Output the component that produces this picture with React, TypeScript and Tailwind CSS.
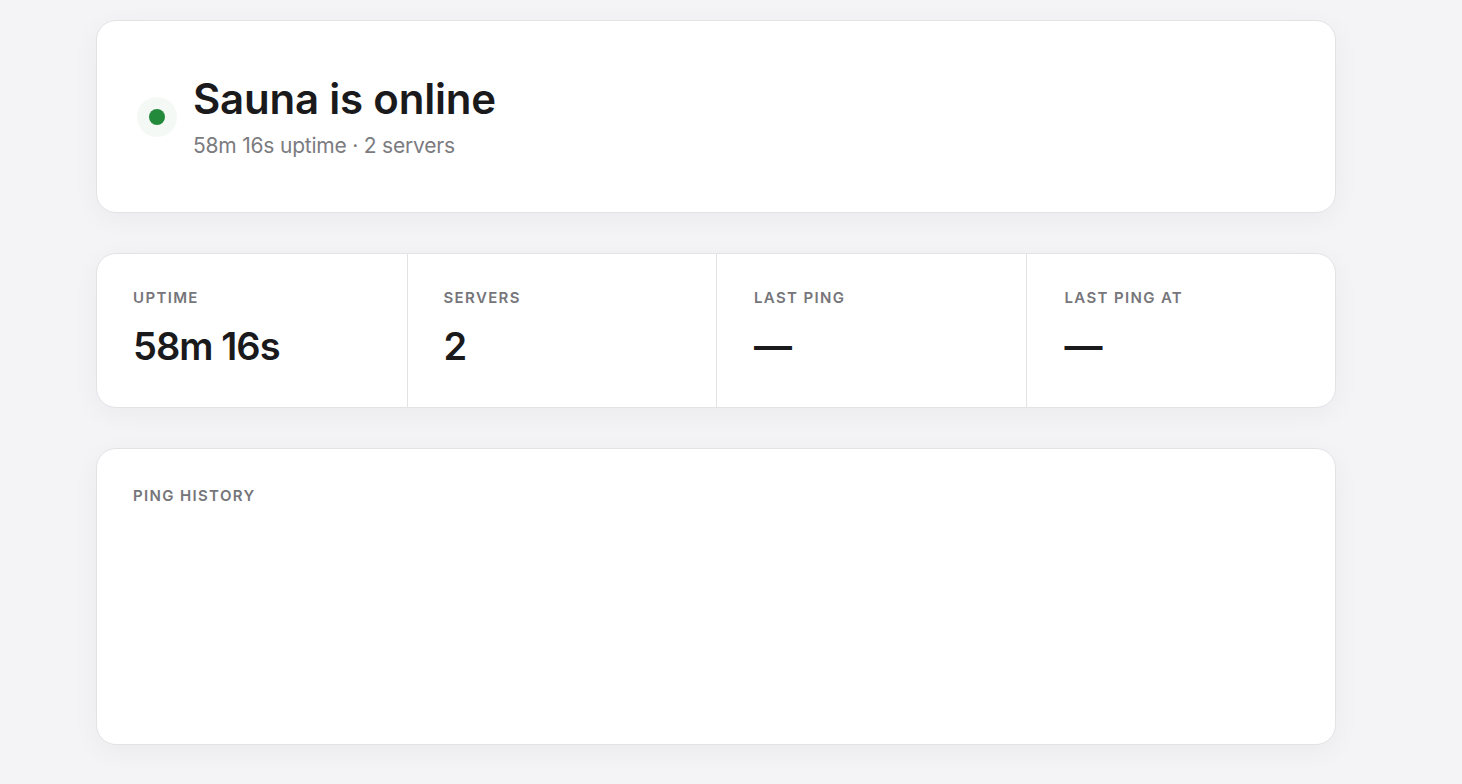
export default function App() {
  const stats = [
    { label: "UPTIME", value: "58m 16s", cls: "pl-9 pr-6 pt-[34px]" },
    { label: "SERVERS", value: "2", cls: "border-l border-[#e3e3e6] pl-9 pr-6 pt-[34px]" },
    { label: "LAST PING", value: "—", cls: "border-l border-[#e3e3e6] pl-[37px] pr-6 pt-[34px]" },
    { label: "LAST PING AT", value: "—", cls: "border-l border-[#e3e3e6] pl-[38px] pr-6 pt-[34px]" },
  ];
  return (
    <div
      className="min-h-[784px] bg-[#f4f4f6] pt-5 pb-10"
      style={{ fontFamily: "Inter, 'Noto Sans', sans-serif" }}
    >
      <div className="ml-24 flex w-[1240px] flex-col gap-10">
        <div className="flex h-[193px] items-center gap-4 rounded-[20px] border border-[#e3e3e6] bg-white px-10 shadow-[0_6px_28px_rgba(0,0,0,0.045)]">
          <div className="flex h-10 w-10 items-center justify-center rounded-full bg-[#f5f9f5]">
            <div className="h-4 w-4 rounded-full bg-[#238a3b]" />
          </div>
          <div className="flex flex-col">
            <h1 className="text-[42px] font-semibold leading-[50px] tracking-[-0.005em] text-[#1a1a1c]">
              Sauna is online
            </h1>
            <p className="mt-2 text-[21px] leading-7 tracking-[-0.01em] text-[#7b7b80]">
              58m 16s uptime · 2 servers
            </p>
          </div>
        </div>

        <div className="grid h-[155px] grid-cols-4 rounded-[20px] border border-[#e3e3e6] bg-white shadow-[0_6px_28px_rgba(0,0,0,0.045)]">
          {stats.map((s) => (
            <div key={s.label} className={s.cls}>
              <div className="text-[15px] font-semibold leading-5 tracking-[0.09em] text-[#75757a]">
                {s.label}
              </div>
              <div className="mt-[18px] text-[38px] font-semibold leading-10 tracking-[-0.025em] text-[#1a1a1c]">
                {s.value}
              </div>
            </div>
          ))}
        </div>

        <div className="h-[297px] rounded-[20px] border border-[#e3e3e6] bg-white px-9 pt-[37px] shadow-[0_6px_28px_rgba(0,0,0,0.045)]">
          <div className="text-[15px] font-semibold leading-5 tracking-[0.09em] text-[#75757a]">
            PING HISTORY
          </div>
        </div>
      </div>
    </div>
  );
}
